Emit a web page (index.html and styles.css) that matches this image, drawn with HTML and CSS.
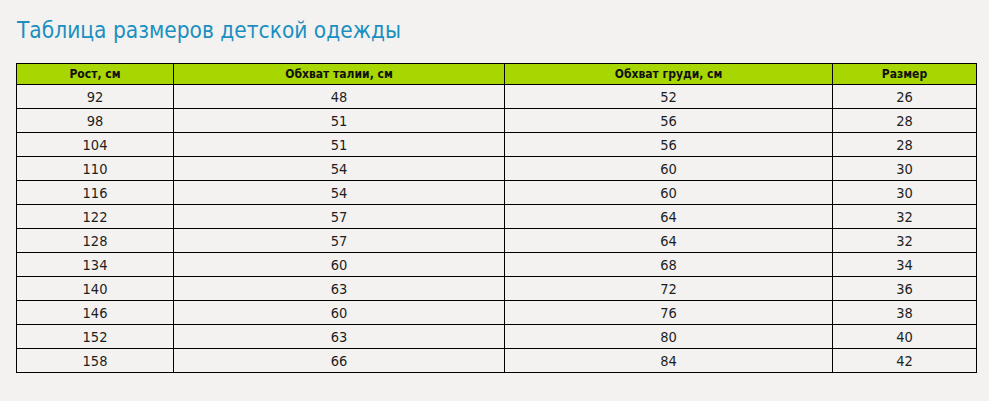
FILE: index.html
```html
<!DOCTYPE html>
<html lang="ru">
<head>
<meta charset="utf-8">
<link rel="stylesheet" href="styles.css">
</head>
<body>
<h1 class="title">Таблица размеров детской одежды</h1>
<table class="sizes">
<colgroup><col class="c1"><col class="c2"><col class="c3"><col class="c4"></colgroup>
<thead>
<tr><th>Рост, см</th><th>Обхват талии, см</th><th>Обхват груди, см</th><th>Размер</th></tr>
</thead>
<tbody>
<tr><td>92</td><td>48</td><td>52</td><td>26</td></tr>
<tr><td>98</td><td>51</td><td>56</td><td>28</td></tr>
<tr><td>104</td><td>51</td><td>56</td><td>28</td></tr>
<tr><td>110</td><td>54</td><td>60</td><td>30</td></tr>
<tr><td>116</td><td>54</td><td>60</td><td>30</td></tr>
<tr><td>122</td><td>57</td><td>64</td><td>32</td></tr>
<tr><td>128</td><td>57</td><td>64</td><td>32</td></tr>
<tr><td>134</td><td>60</td><td>68</td><td>34</td></tr>
<tr><td>140</td><td>63</td><td>72</td><td>36</td></tr>
<tr><td>146</td><td>60</td><td>76</td><td>38</td></tr>
<tr><td>152</td><td>63</td><td>80</td><td>40</td></tr>
<tr><td>158</td><td>66</td><td>84</td><td>42</td></tr>
</tbody>
</table>
</body>
</html>
```
FILE: styles.css
```css
html, body { margin: 0; padding: 0; }
body {
  background: #f3f2f0;
  font-family: "DejaVu Sans Condensed", "DejaVu Sans", sans-serif;
  color: #1e1e1e;
  padding: 0 14px 0 16px;
}
.title {
  margin: 0;
  padding: 16px 0 0 1px;
  height: 63px;
  box-sizing: border-box;
  font-weight: normal;
  font-size: 22.5px;
  line-height: 28px;
  color: #1a8fc0;
}
.sizes {
  width: 960px;
  border-collapse: collapse;
  table-layout: fixed;
}
.c1 { width: 157px; }
.c2 { width: 331px; }
.c3 { width: 328px; }
.c4 { width: 144px; }
.sizes th, .sizes td {
  border: 1px solid #000;
  padding: 0;
  text-align: center;
}
.sizes th {
  background: #a8d600;
  height: 20px;
  font-size: 12px;
  font-weight: bold;
  color: #111;
}
.sizes td {
  height: 23px;
  font-size: 14.5px;
}
```
